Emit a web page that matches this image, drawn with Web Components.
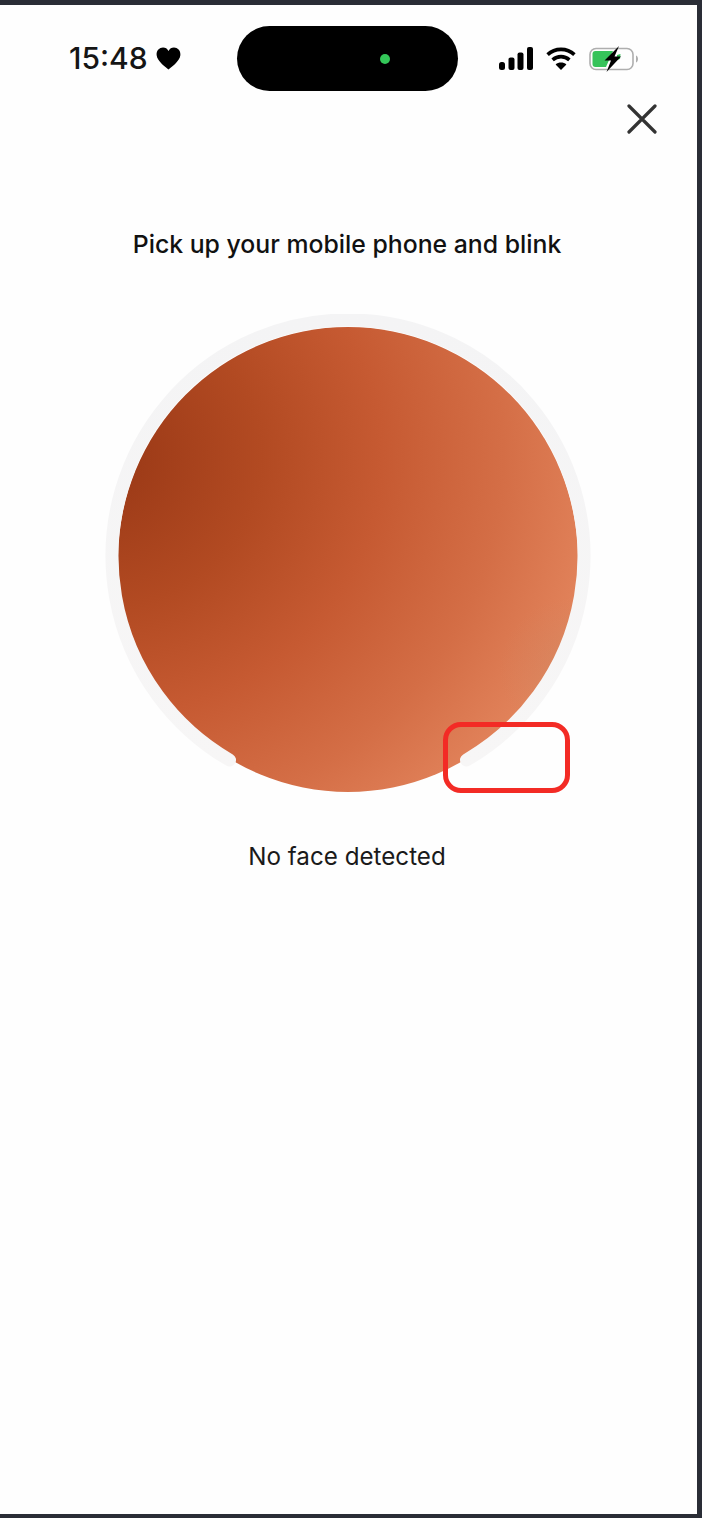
<!DOCTYPE html>
<html>
<head>
<meta charset="utf-8">
<style>
html, body { margin: 0; padding: 0; background: #2a2d36; }
body { font-family: Inter, "Liberation Sans", sans-serif; }
</style>
</head>
<body>
<phone-screen>
  <status-bar time="15:48"></status-bar>
  <close-button></close-button>
  <blink-check title-text="Pick up your mobile phone and blink" status="No face detected"></blink-check>
</phone-screen>

<script>
class PhoneScreen extends HTMLElement {
  constructor() {
    super();
    this.attachShadow({ mode: 'open' });
    this.shadowRoot.innerHTML = `
      <style>
        :host { display: block; box-sizing: border-box; width: 702px; height: 1518px; padding: 5px 5px 4px 0; background: #2a2d36; }
        .screen { height: 100%; background: #fefefe; color: #111; display: flex; flex-direction: column; }
      </style>
      <div class="screen"><slot></slot></div>
    `;
  }
}

class StatusBar extends HTMLElement {
  constructor() {
    super();
    this.attachShadow({ mode: 'open' });
    this.shadowRoot.innerHTML = `
      <style>
        :host { display: grid; grid-template-columns: 237px 221px 1fr; align-items: center; padding-top: 21px; height: 65px; }
        .left { display: flex; align-items: center; gap: 8px; padding-left: 69px; }
        .time { font-size: 30px; font-weight: 500; line-height: 32px; padding-bottom: 2px; color: #151515; }
        .island { height: 65px; border-radius: 32.5px; background: #000; display: flex; align-items: center; justify-content: flex-end; padding-right: 68px; box-sizing: border-box; }
        .dot { width: 10px; height: 10px; border-radius: 50%; background: #34c759; }
        .right { display: flex; align-items: center; padding-left: 41px; gap: 13px; }
        svg { display: block; }
      </style>
      <div class="left">
        <span class="time"></span>
        <svg width="25" height="23" viewBox="0 0 25 23"><path fill="#000" d="M12.500 22.500C11 21 1 14.500 .6 8 .3 3.500 3.500 .6 7 .6c2.500 0 4.300 1.200 5.500 3.300C13.700 1.800 15.500 .6 18 .6c3.500 0 6.700 2.900 6.400 7.400C24 14.500 14 21 12.500 22.500Z"/></svg>
      </div>
      <div class="island"><span class="dot"></span></div>
      <div class="right">
        <svg width="34" height="23" viewBox="0 0 34 23" fill="#000">
          <rect x="0" y="15" width="6" height="8" rx="2.500"/>
          <rect x="9.500" y="10.500" width="6" height="12.500" rx="2"/>
          <rect x="18.500" y="5.500" width="6" height="17.500" rx="2"/>
          <rect x="28" y="0" width="6" height="23" rx="2"/>
        </svg>
        <svg width="30" height="23" viewBox="0 0 30 23">
          <path fill="none" stroke="#000" stroke-width="3.600" d="M1.600 7.600C9 .6 21 .6 28.400 7.600"/>
          <path fill="none" stroke="#000" stroke-width="3.600" d="M6.600 12.800C11.500 8.500 18.500 8.500 23.400 12.800"/>
          <path fill="#000" d="M15 23l-5.400-5.500c3-2.600 7.800-2.600 10.800 0Z"/>
        </svg>
        <svg width="50" height="26" viewBox="0 0 50 26">
          <rect x="1" y="2.500" width="43" height="21" rx="6" fill="none" stroke="#aeaeae" stroke-width="1.600"/>
          <path fill="#36c35a" d="M6.500 5H24L17 21H6.500A3 3 0 0 1 3.500 18V8A3 3 0 0 1 6.500 5Z"/>
          <path fill="#36c35a" d="M28 9l3.500-1L31 13l-3 1Z"/>
          <path fill="#000" d="M30 0L15.500 14.500H22L17.500 26 32 10.500H25.500Z"/>
          <path fill="#aeaeae" d="M47 9.500c1.500.6 2 2 2 3.500s-.5 2.900-2 3.500Z"/>
        </svg>
      </div>
    `;
    this.shadowRoot.querySelector('.time').textContent = this.getAttribute('time');
  }
}

class CloseButton extends HTMLElement {
  constructor() {
    super();
    this.attachShadow({ mode: 'open' });
    this.shadowRoot.innerHTML = `
      <style>
        :host { display: flex; justify-content: flex-end; padding: 13px 40px 0 0; }
        svg { display: block; }
      </style>
      <svg width="30" height="30" viewBox="0 0 30 30" fill="none" stroke="#333" stroke-width="3.200" stroke-linecap="round">
        <path d="M2 2L28 28M28 2L2 28"/>
      </svg>
    `;
  }
}

class BlinkCheck extends HTMLElement {
  constructor() {
    super();
    this.attachShadow({ mode: 'open' });
    this.shadowRoot.innerHTML = `
      <style>
        :host { display: flex; flex-direction: column; align-items: center; padding-top: 94px; padding-right: 3px; }
        h1 { margin: 0; font-size: 24.800px; font-weight: 500; line-height: 32px; color: #111; white-space: nowrap; }
        .stage { position: relative; width: 486px; height: 480px; margin: 54px 0 0 1px; }
        .ring { position: absolute; left: 0; top: 0; }
        .disc {
          position: absolute; left: 13px; top: 13px; width: 460px; height: 465px; border-radius: 50%;
          background:
            radial-gradient(circle at 99% 74%, rgba(200,135,100,.4) 0, rgba(200,135,100,0) 13%),
            radial-gradient(ellipse 120% 108% at -5% 28%, #9c3a17 5%, #b24a22 30%, #c65a32 52%, #d46e46 74%, #e08058 90%, #e68e62 100%);
        }
        .marker { position: absolute; left: 338px; top: 408px; box-sizing: border-box; width: 127px; height: 71px; border: 5px solid #f32b25; border-radius: 18px; }
        p { margin: 48px 0 0; font-size: 24.200px; line-height: 30px; color: #1a1a1a; white-space: nowrap; }
      </style>
      <h1></h1>
      <div class="stage">
        <div class="disc"></div>
        <svg class="ring" width="486" height="480" viewBox="0 0 486 480" fill="none" stroke="url(#ringFade)" stroke-width="13" stroke-linecap="round">
          <defs>
            <linearGradient id="ringFade" gradientUnits="userSpaceOnUse" x1="0" y1="0" x2="0" y2="460">
              <stop offset="0" stop-color="#f4f4f5"/>
              <stop offset="1" stop-color="#f7f6f6"/>
            </linearGradient>
          </defs>
          <path d="M124.500 446A236 236 0 1 1 361.500 446"/>
        </svg>
        <div class="marker"></div>
      </div>
      <p></p>
    `;
    this.shadowRoot.querySelector('h1').textContent = this.getAttribute('title-text');
    this.shadowRoot.querySelector('p').textContent = this.getAttribute('status');
  }
}

customElements.define('phone-screen', PhoneScreen);
customElements.define('status-bar', StatusBar);
customElements.define('close-button', CloseButton);
customElements.define('blink-check', BlinkCheck);
</script>
</body>
</html>
